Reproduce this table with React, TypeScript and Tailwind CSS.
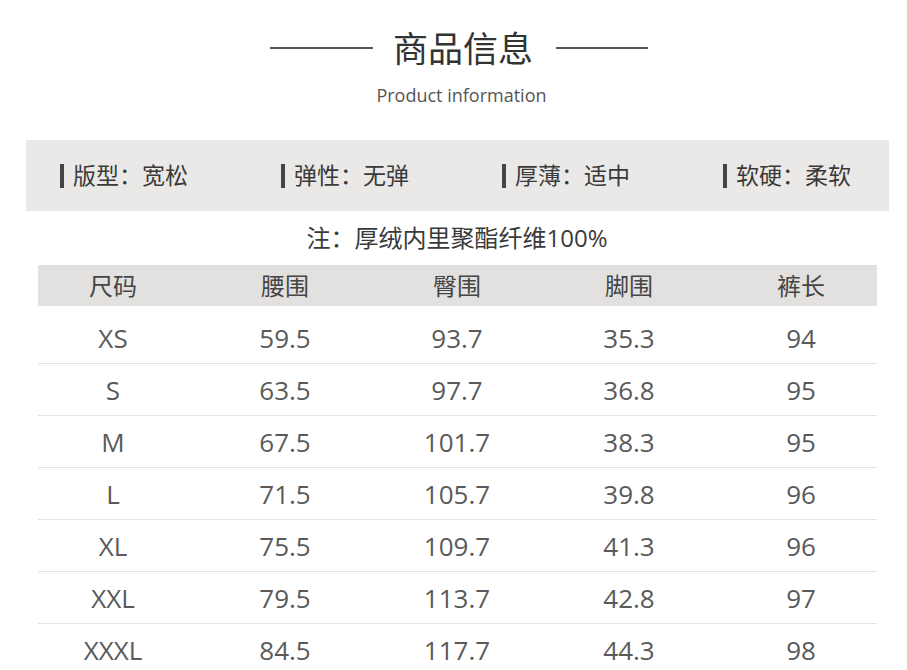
const specs = [
  { label: '版型', value: '宽松' },
  { label: '弹性', value: '无弹' },
  { label: '厚薄', value: '适中' },
  { label: '软硬', value: '柔软' },
];

const headers = ['尺码', '腰围', '臀围', '脚围', '裤长'];

const rows = [
  ['XS', '59.5', '93.7', '35.3', '94'],
  ['S', '63.5', '97.7', '36.8', '95'],
  ['M', '67.5', '101.7', '38.3', '95'],
  ['L', '71.5', '105.7', '39.8', '96'],
  ['XL', '75.5', '109.7', '41.3', '96'],
  ['XXL', '79.5', '113.7', '42.8', '97'],
  ['XXXL', '84.5', '117.7', '44.3', '98'],
];

export default function App() {
  return (
    <div className="w-[907px] h-[670px] overflow-hidden bg-white font-['Open_Sans','Noto_Sans_CJK_SC',sans-serif]">
      {/* Title */}
      <div className="mt-[23px] h-[50px] flex items-center justify-center pl-[11px]">
        <div className="w-[103px] h-[2px] bg-[#555]" />
        <div className="ml-[20px] mr-[23px] text-[35px] leading-none text-[#333]">商品信息</div>
        <div className="w-[92px] h-[2px] bg-[#555]" />
      </div>
      <div className="mt-[10px] h-[24px] flex items-center justify-center pl-[16px] text-[18px] text-[#555]">
        Product information
      </div>

      {/* Spec bar */}
      <div className="mt-[33px] ml-[26px] w-[863px] h-[71px] bg-[#eae9e7] flex items-center pl-[34px]">
        {specs.map((s) => (
          <div key={s.label} className="w-[221px] shrink-0 flex items-center">
            <div className="w-[4px] h-[24px] bg-[#444] mr-[9px]" />
            <span className="text-[23px] leading-none text-[#3a3a3a]">
              {s.label}：{s.value}
            </span>
          </div>
        ))}
      </div>

      {/* Note */}
      <div className="mt-[11px] h-[32px] flex items-center justify-center pl-[7px] text-[24px] text-[#3a3a3a]">
        注：厚绒内里聚酯纤维100%
      </div>

      {/* Size table */}
      <div className="mt-[11px] ml-[38px] w-[839px]">
        <div className="h-[41px] bg-[#e2e1df] flex items-center">
          <div className="-ml-[11px] grid grid-cols-[repeat(5,172px)]">
            {headers.map((h) => (
              <div key={h} className="text-center text-[24px] text-[#454545]">
                {h}
              </div>
            ))}
          </div>
        </div>
        <div className="mt-[6px]">
          {rows.map((r) => (
            <div key={r[0]} className="h-[52px] border-b border-[#e3e3e3] flex items-center">
              <div className="-ml-[11px] grid grid-cols-[repeat(5,172px)]">
                {r.map((c, i) => (
                  <div key={i} className="text-center text-[26px] text-[#5a5a5a] leading-none">
                    {c}
                  </div>
                ))}
              </div>
            </div>
          ))}
        </div>
      </div>
    </div>
  );
}
